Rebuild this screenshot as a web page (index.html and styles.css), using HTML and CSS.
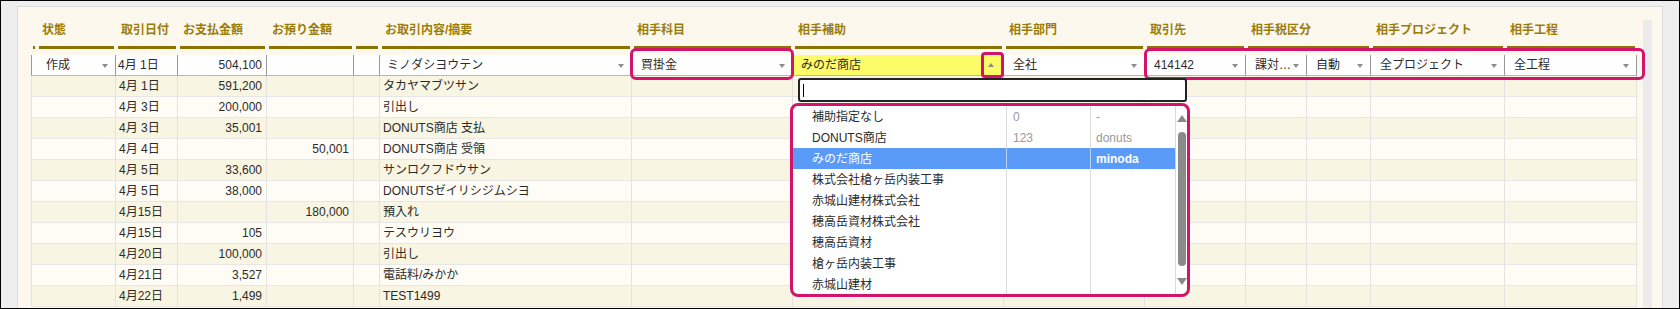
FILE: index.html
```html
<!DOCTYPE html>
<html lang="ja">
<head>
  <meta charset="UTF-8">
  <meta name="viewport" content="width=device-width, initial-scale=1.0">
  <title>仕訳入力</title>
  <link rel="stylesheet" href="styles.css">
</head>
<body>
  <div class="screen">
    <div class="panel">
      <div class="sheet">
        <div class="grid">
          <!-- column headers -->
          <div class="row head">
            <div class="th"><span class="label"></span><span class="rule"></span></div>
            <div class="th"><span class="label">状態</span><span class="rule"></span></div>
            <div class="th"><span class="label">取引日付</span><span class="rule"></span></div>
            <div class="th"><span class="label">お支払金額</span><span class="rule"></span></div>
            <div class="th"><span class="label">お預り金額</span><span class="rule"></span></div>
            <div class="th"><span class="label"></span><span class="rule"></span></div>
            <div class="th"><span class="label">お取引内容/摘要</span><span class="rule"></span></div>
            <div class="th"><span class="label">相手科目</span><span class="rule"></span></div>
            <div class="th"><span class="label">相手補助</span><span class="rule"></span></div>
            <div class="th"><span class="label">相手部門</span><span class="rule"></span></div>
            <div class="th"><span class="label">取引先</span><span class="rule"></span></div>
            <div class="th span2"><span class="label">相手税区分</span><span class="rule"></span></div>
            <div class="th"><span class="label">相手プロジェクト</span><span class="rule"></span></div>
            <div class="th"><span class="label">相手工程</span><span class="rule"></span></div>
          </div>

          <!-- row being edited -->
          <div class="row entry">
            <div class="edge"></div>
            <div class="sel">作成</div>
            <div class="date">4月 1日</div>
            <div class="num">504,100</div>
            <div></div>
            <div></div>
            <div class="sel memo">ミノダシヨウテン</div>
            <div class="sel">買掛金</div>
            <div class="sel open">みのだ商店</div>
            <div class="sel">全社</div>
            <div class="sel">414142</div>
            <div class="sel">課対…</div>
            <div class="sel">自動</div>
            <div class="sel">全プロジェクト</div>
            <div class="sel">全工程</div>
          </div>

          <div class="row data odd"><div class="edge"></div><div></div><div class="date">4月 1日</div><div class="num">591,200</div><div class="num"></div><div></div><div>タカヤマブツサン</div><div></div><div></div><div></div><div></div><div></div><div></div><div></div><div></div></div>
          <div class="row data"><div class="edge"></div><div></div><div class="date">4月 3日</div><div class="num">200,000</div><div class="num"></div><div></div><div>引出し</div><div></div><div></div><div></div><div></div><div></div><div></div><div></div><div></div></div>
          <div class="row data odd"><div class="edge"></div><div></div><div class="date">4月 3日</div><div class="num">35,001</div><div class="num"></div><div></div><div>DONUTS商店 支払</div><div></div><div></div><div></div><div></div><div></div><div></div><div></div><div></div></div>
          <div class="row data"><div class="edge"></div><div></div><div class="date">4月 4日</div><div class="num"></div><div class="num">50,001</div><div></div><div>DONUTS商店 受領</div><div></div><div></div><div></div><div></div><div></div><div></div><div></div><div></div></div>
          <div class="row data odd"><div class="edge"></div><div></div><div class="date">4月 5日</div><div class="num">33,600</div><div class="num"></div><div></div><div>サンロクフドウサン</div><div></div><div></div><div></div><div></div><div></div><div></div><div></div><div></div></div>
          <div class="row data"><div class="edge"></div><div></div><div class="date">4月 5日</div><div class="num">38,000</div><div class="num"></div><div></div><div>DONUTSゼイリシジムシヨ</div><div></div><div></div><div></div><div></div><div></div><div></div><div></div><div></div></div>
          <div class="row data odd"><div class="edge"></div><div></div><div class="date">4月15日</div><div class="num"></div><div class="num">180,000</div><div></div><div>預入れ</div><div></div><div></div><div></div><div></div><div></div><div></div><div></div><div></div></div>
          <div class="row data"><div class="edge"></div><div></div><div class="date">4月15日</div><div class="num">105</div><div class="num"></div><div></div><div>テスウリヨウ</div><div></div><div></div><div></div><div></div><div></div><div></div><div></div><div></div></div>
          <div class="row data odd"><div class="edge"></div><div></div><div class="date">4月20日</div><div class="num">100,000</div><div class="num"></div><div></div><div>引出し</div><div></div><div></div><div></div><div></div><div></div><div></div><div></div><div></div></div>
          <div class="row data"><div class="edge"></div><div></div><div class="date">4月21日</div><div class="num">3,527</div><div class="num"></div><div></div><div>電話料/みかか</div><div></div><div></div><div></div><div></div><div></div><div></div><div></div><div></div></div>
          <div class="row data odd"><div class="edge"></div><div></div><div class="date">4月22日</div><div class="num">1,499</div><div class="num"></div><div></div><div>TEST1499</div><div></div><div></div><div></div><div></div><div></div><div></div><div></div><div></div></div>
        </div>
        <div class="vscroll"></div>
      </div>

      <!-- annotation frames -->
      <div class="mark mark-account"></div>
      <div class="mark mark-arrow"></div>
      <div class="mark mark-partner"></div>

      <!-- sub-account picker -->
      <div class="picker-search"></div>
      <div class="picker-list">
        <div class="options">
          <div class="opt"><span>補助指定なし</span><span class="code">0</span><span class="kana">-</span></div>
          <div class="opt"><span>DONUTS商店</span><span class="code">123</span><span class="kana">donuts</span></div>
          <div class="opt active"><span>みのだ商店</span><span class="code"></span><span class="kana strong">minoda</span></div>
          <div class="opt"><span>株式会社槍ヶ岳内装工事</span><span class="code"></span><span class="kana"></span></div>
          <div class="opt"><span>赤城山建材株式会社</span><span class="code"></span><span class="kana"></span></div>
          <div class="opt"><span>穂高岳資材株式会社</span><span class="code"></span><span class="kana"></span></div>
          <div class="opt"><span>穂高岳資材</span><span class="code"></span><span class="kana"></span></div>
          <div class="opt"><span>槍ヶ岳内装工事</span><span class="code"></span><span class="kana"></span></div>
          <div class="opt"><span>赤城山建材</span><span class="code"></span><span class="kana"></span></div>
        </div>
        <div class="opt-scroll">
          <span class="up"></span>
          <span class="thumb"></span>
          <span class="down"></span>
        </div>
      </div>
    </div>
  </div>
</body>
</html>
```

FILE: styles.css
```css
body {
  margin: 0;
  font-family: "Liberation Sans", "Noto Sans CJK JP", sans-serif;
  font-size: 12px;
  color: #2b2b2b;
}

.screen {
  width: 1680px;
  height: 309px;
  box-sizing: border-box;
  border: 1px solid #000;
  background-color: #eeeeee;
  padding: 5px 0 0 16px;
  overflow: hidden;
}

.panel {
  position: relative;
  width: 1646px;
  height: 330px;
  box-sizing: border-box;
  border: 1px solid #dcdcdc;
  background-color: #fcf8ee;
  padding-left: 13px;
}

.sheet {
  display: flex;
  gap: 6px;
}

.grid {
  width: 1606px;
}

.row {
  display: grid;
  grid-template-columns: 6px 79px 62px 89px 87px 26px 252px 161px 211px 141px 101px 61px 64px 134px 132px;
}

/* header */
.head {
  height: 48px;
}

.th {
  display: flex;
  flex-direction: column;
  padding-top: 15px;
}

.th.span2 {
  grid-column: span 2;
}

.label {
  height: 16px;
  line-height: 16px;
  padding-left: 5px;
  font-weight: bold;
  color: #9c7c08;
  white-space: nowrap;
}

.rule {
  height: 3px;
  margin: 8px 2px 0;
  background-color: #8a7300;
}

/* cells */
.entry > div,
.data > div {
  box-sizing: border-box;
  height: 21px;
  line-height: 21px;
  padding: 0 3px;
  white-space: nowrap;
  overflow: hidden;
}

.entry > div {
  position: relative;
  background-color: #fff;
  border-right: 1px solid #9a9a9a;
  border-bottom: 1px solid #b8b8b8;
}

.entry > .edge {
  box-shadow: inset 1px 0 #9a9a9a;
}

.data > div {
  border-right: 1px solid #e2e2e2;
  border-bottom: 1px solid #e6e6e6;
  background-color: #fffcf5;
}

.data.odd > div {
  background-color: #f8f5e2;
}

.data > .edge {
  box-shadow: inset 1px 0 #e2e2e2;
}

.num {
  text-align: right;
  padding-right: 4px !important;
}

.date {
  padding-left: 3px;
}

.entry > .date {
  padding-left: 2px;
}

/* dropdown cells in the edited row */
.entry > .sel {
  padding-left: 9px;
}

.entry > .memo {
  padding-left: 7px;
}

.sel::after {
  content: "";
  position: absolute;
  right: 7px;
  top: 9px;
  border-left: 3px solid transparent;
  border-right: 3px solid transparent;
  border-top: 4px solid #8c8c8c;
}

.entry > .open {
  background-color: #fcfc68;
  padding-left: 8px;
}

.open::after {
  right: 9px;
  top: 8px;
  border-top: none;
  border-bottom: 4px solid #8c8c8c;
}

.vscroll {
  width: 9px;
  height: 300px;
  margin-top: 13px;
  background-color: #ebebeb;
}

/* annotation frames */
.mark {
  position: absolute;
  box-sizing: border-box;
  border: 3px solid #d3146a;
  border-radius: 6px;
}

.mark-account {
  left: 612px;
  top: 41px;
  width: 164px;
  height: 32px;
}

.mark-arrow {
  left: 963px;
  top: 45px;
  width: 23px;
  height: 26px;
  border-radius: 4px;
}

.mark-partner {
  left: 1126px;
  top: 41px;
  width: 501px;
  height: 32px;
}

/* picker */
.picker-search {
  position: absolute;
  left: 780px;
  top: 71px;
  width: 389px;
  height: 24px;
  box-sizing: border-box;
  border: 2px solid #222;
  border-radius: 3px;
  background-color: #fff;
}

.picker-search::before {
  content: "";
  position: absolute;
  left: 3px;
  top: 4px;
  width: 1px;
  height: 13px;
  background-color: #000;
}

.picker-list {
  position: absolute;
  left: 772px;
  top: 96px;
  width: 400px;
  height: 194px;
  box-sizing: border-box;
  border: 3px solid #d3146a;
  border-radius: 8px;
  background-color: #fff;
  display: flex;
  overflow: hidden;
}

.options {
  width: 383px;
}

.opt {
  display: grid;
  grid-template-columns: 214px 84px 85px;
  height: 21px;
  line-height: 23px;
}

.opt span {
  border-right: 1px solid #dadada;
  padding-left: 19px;
  white-space: nowrap;
  overflow: hidden;
}

.opt .code {
  padding-left: 6px;
  color: #999;
}

.opt .kana {
  padding-left: 5px;
  color: #999;
}

.opt.active {
  background-color: #5a9bf7;
  color: #fff;
}

.opt.active span {
  border-right-color: #b9d3fb;
  color: #fff;
}

.opt .strong {
  font-weight: bold;
}

.opt-scroll {
  position: relative;
  width: 11px;
}

.opt-scroll .up,
.opt-scroll .down {
  position: absolute;
  left: 1px;
  border-left: 5px solid transparent;
  border-right: 5px solid transparent;
}

.opt-scroll .up {
  top: 9px;
  border-bottom: 7px solid #8a8a8a;
}

.opt-scroll .down {
  top: 172px;
  border-top: 7px solid #8a8a8a;
}

.opt-scroll .thumb {
  position: absolute;
  left: 2px;
  top: 26px;
  width: 8px;
  height: 134px;
  border-radius: 4px;
  background-color: #8a8a8a;
}
```
